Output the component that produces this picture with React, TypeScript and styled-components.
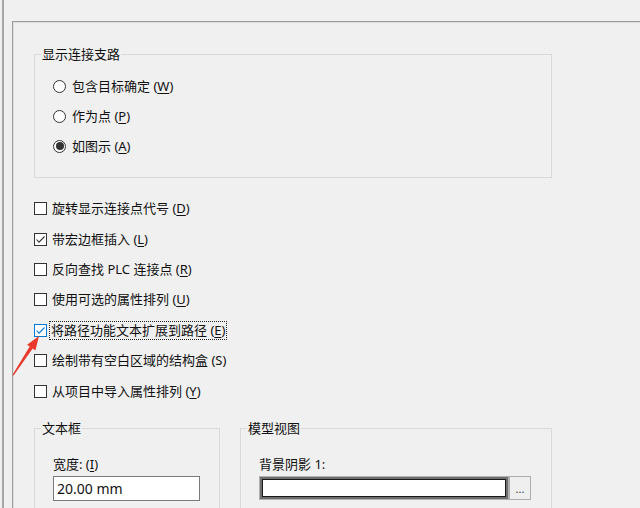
import React from 'react';
import styled, { createGlobalStyle } from 'styled-components';

const GlobalStyle = createGlobalStyle`
  html, body {
    margin: 0;
    padding: 0;
    background: #f0f0f0;
  }
  body {
    font-family: "Segoe UI", "Noto Sans", "Noto Sans CJK SC", sans-serif;
    font-size: 13px;
    color: #111;
  }
`;

const Root = styled.div`
  position: relative;
  width: 640px;
  height: 508px;
  overflow: hidden;
  padding-left: 2px;
  box-sizing: border-box;
`;

const Page = styled.div`
  height: 100%;
  box-sizing: border-box;
  border-left: 2px solid #a6a6a6;
  padding: 21px 0 0 8px;
`;

const Panel = styled.div`
  height: 100%;
  box-sizing: border-box;
  border-top: 1px solid #9c9c9c;
  border-left: 1px solid #9c9c9c;
  box-shadow: inset 1px 1px 0 #dedede;
  padding: 24px 0 0 21px;
`;

const Group = styled.fieldset<{ $width: number }>`
  margin: 0;
  width: ${p => p.$width}px;
  box-sizing: border-box;
  border: 1px solid #d9d9d9;
  padding: 0 0 16px 6px;
`;

const Legend = styled.legend`
  padding: 0 1px;
  line-height: 16px;
  font-size: 13px;
`;

const GroupBody = styled.div<{ $top: number }>`
  padding: ${p => p.$top}px 0 0 12px;
`;

const OptionRow = styled.div<{ $h: number }>`
  display: flex;
  align-items: center;
  height: ${p => p.$h}px;
  gap: 4px;
  white-space: nowrap;
`;

const Radio = styled.span<{ $on?: boolean }>`
  width: 13px;
  height: 13px;
  box-sizing: border-box;
  border: 1px solid #333;
  border-radius: 50%;
  background: #fff;
  display: flex;
  align-items: center;
  justify-content: center;
  margin-right: 1px;
  &::after {
    content: '';
    display: ${p => (p.$on ? 'block' : 'none')};
    width: 8px;
    height: 8px;
    border-radius: 50%;
    background: #333;
  }
`;

const Box = styled.span<{ $focus?: boolean }>`
  width: 13px;
  height: 13px;
  box-sizing: border-box;
  border: 1px solid ${p => (p.$focus ? '#0078d7' : '#333')};
  background: #fff;
  display: flex;
  align-items: center;
  justify-content: center;
`;

const CheckList = styled.div`
  margin-top: 15.5px;
`;

const Label = styled.span<{ $focus?: boolean }>`
  line-height: 17px;
  border: 1px dotted ${p => (p.$focus ? '#222' : 'transparent')};
  padding: 0 ${p => (p.$focus ? '1px' : '0')};
  margin-left: ${p => (p.$focus ? '-2px' : '0')};
  u {
    text-underline-offset: 2px;
  }
`;

const BottomRow = styled.div`
  display: flex;
  gap: 20px;
  margin-top: 14px;
`;

const FieldLabel = styled.div`
  line-height: 16px;
  margin-bottom: 4px;
  white-space: nowrap;
  u {
    text-underline-offset: 2px;
  }
`;

const TextInput = styled.input`
  width: 147px;
  height: 25px;
  box-sizing: border-box;
  border: 1px solid #7a7a7a;
  background: #fff;
  padding: 0 0 0 3px;
  margin: 0;
  font-family: inherit;
  font-size: 14px;
  color: #111;
  outline: none;
`;

const PickerRow = styled.div`
  display: flex;
`;

const ColorField = styled.div`
  width: 250px;
  height: 24px;
  box-sizing: border-box;
  background: #fff;
  border: 1px solid #b0b0b0;
  box-shadow: inset 0 0 0 2px #6e6e6e, inset 0 0 0 3px #1a1a1a;
`;

const DotsButton = styled.div`
  width: 22px;
  height: 24px;
  box-sizing: border-box;
  border: 1px solid #adadad;
  background: #efefef;
  display: flex;
  align-items: flex-end;
  justify-content: center;
  padding-bottom: 6px;
  font-size: 11px;
  line-height: 8px;
  color: #333;
`;

const Arrow = styled.svg`
  position: absolute;
  left: 0;
  top: 0;
  pointer-events: none;
`;

function Check({ color }: { color: string }) {
  return (
    <svg width="11" height="11" viewBox="0 0 11 11">
      <polyline points="1.5,5.5 4,8.2 9.5,2.5" fill="none" stroke={color} strokeWidth="1.1" />
    </svg>
  );
}

type Item = { text: string; key: string; on: boolean; focus?: boolean; plain?: boolean };

const radios: Item[] = [
  { text: '包含目标确定 ', key: 'W', on: false },
  { text: '作为点 ', key: 'P', on: false },
  { text: '如图示 ', key: 'A', on: true },
];

const checks: Item[] = [
  { text: '旋转显示连接点代号 ', key: 'D', on: false },
  { text: '带宏边框插入 ', key: 'L', on: true },
  { text: '反向查找 PLC 连接点 ', key: 'R', on: false },
  { text: '使用可选的属性排列 ', key: 'U', on: false },
  { text: '将路径功能文本扩展到路径 ', key: 'E', on: true, focus: true },
  { text: '绘制带有空白区域的结构盒 ', key: 'S', on: false, plain: true },
  { text: '从项目中导入属性排列 ', key: 'Y', on: false },
];

export default function App() {
  return (
    <Root>
      <GlobalStyle />
      <Page>
        <Panel>
          <Group $width={518}>
            <Legend>显示连接支路</Legend>
            <GroupBody $top={9}>
              {radios.map(r => (
                <OptionRow $h={30} key={r.key}>
                  <Radio $on={r.on} />
                  <Label>
                    {r.text}(<u>{r.key}</u>)
                  </Label>
                </OptionRow>
              ))}
            </GroupBody>
          </Group>

          <CheckList>
            {checks.map(c => (
              <OptionRow $h={30.4} key={c.key}>
                <Box $focus={c.focus}>{c.on && <Check color={c.focus ? '#0078d7' : '#333'} />}</Box>
                <Label $focus={c.focus}>
                  {c.text}({c.plain ? c.key : <u>{c.key}</u>})
                </Label>
              </OptionRow>
            ))}
          </CheckList>

          <BottomRow>
            <Group $width={186}>
              <Legend>文本框</Legend>
              <GroupBody $top={20}>
                <FieldLabel>
                  宽度: (<u>I</u>)
                </FieldLabel>
                <TextInput readOnly value="20.00 mm" />
              </GroupBody>
            </Group>
            <Group $width={312}>
              <Legend>模型视图</Legend>
              <GroupBody $top={20}>
                <FieldLabel>背景阴影 1:</FieldLabel>
                <PickerRow>
                  <ColorField />
                  <DotsButton>...</DotsButton>
                </PickerRow>
              </GroupBody>
            </Group>
          </BottomRow>
        </Panel>
      </Page>
      <Arrow width="50" height="390" viewBox="0 0 50 390">
        <polygon
          points="12.4,375 29.7,346.6 27.1,344.8 39,336 35.4,350.4 32.7,348.6 13.6,375.6"
          fill="#e8392c"
        />
      </Arrow>
    </Root>
  );
}
